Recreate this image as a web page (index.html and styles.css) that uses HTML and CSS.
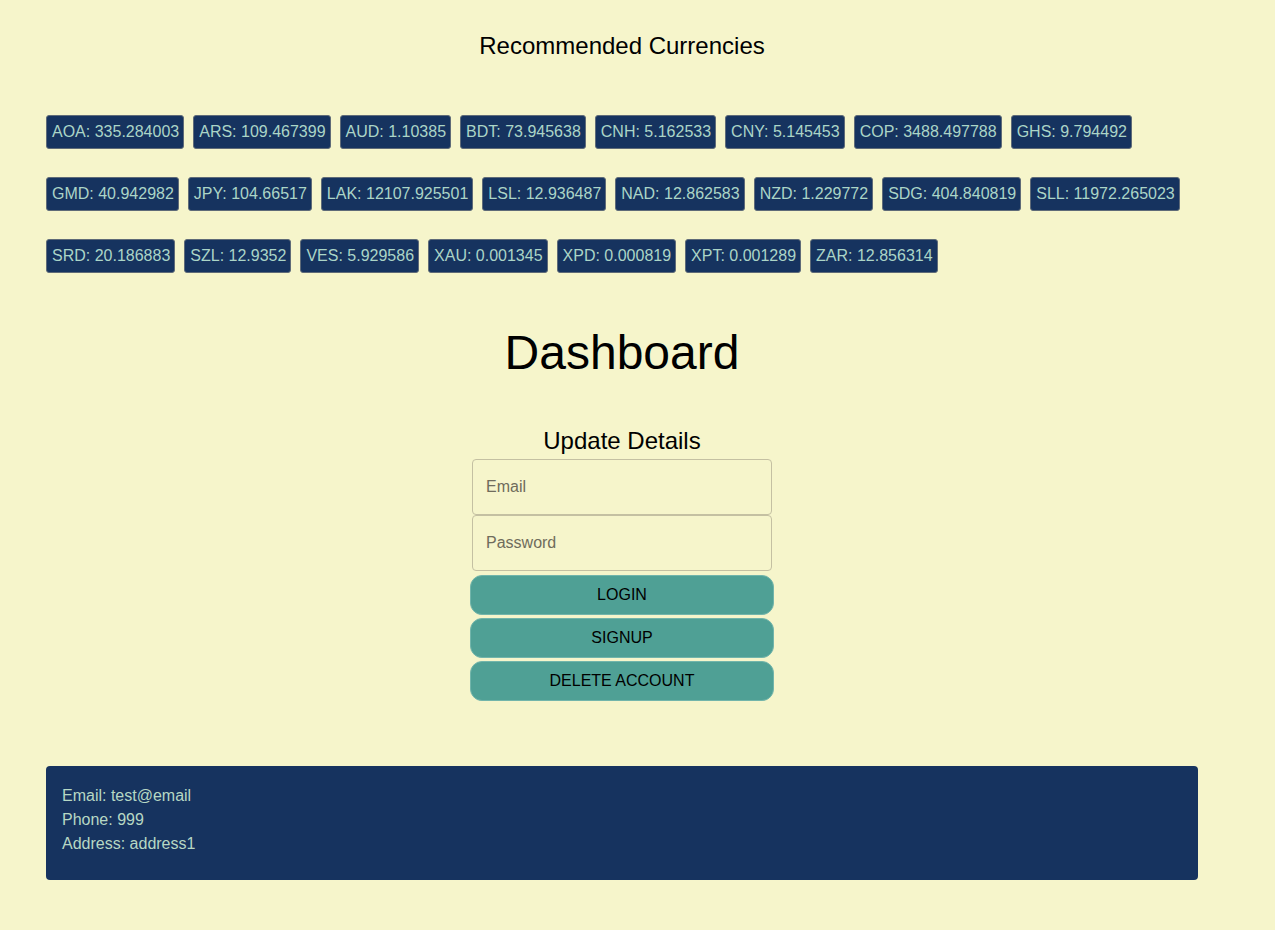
FILE: index.html
```html
<!DOCTYPE html>
<html lang="en">
<head>
<meta charset="utf-8">
<title>Dashboard</title>
<link rel="stylesheet" href="styles.css">
</head>
<body>
<div class="page">
  <h2 class="rec-title">Recommended Currencies</h2>
  <div class="badges">
    <span class="badge">AOA: 335.284003</span>
    <span class="badge">ARS: 109.467399</span>
    <span class="badge">AUD: 1.10385</span>
    <span class="badge">BDT: 73.945638</span>
    <span class="badge">CNH: 5.162533</span>
    <span class="badge">CNY: 5.145453</span>
    <span class="badge">COP: 3488.497788</span>
    <span class="badge">GHS: 9.794492</span>
    <span class="badge">GMD: 40.942982</span>
    <span class="badge">JPY: 104.66517</span>
    <span class="badge">LAK: 12107.925501</span>
    <span class="badge">LSL: 12.936487</span>
    <span class="badge">NAD: 12.862583</span>
    <span class="badge">NZD: 1.229772</span>
    <span class="badge">SDG: 404.840819</span>
    <span class="badge">SLL: 11972.265023</span>
    <span class="badge">SRD: 20.186883</span>
    <span class="badge">SZL: 12.9352</span>
    <span class="badge">VES: 5.929586</span>
    <span class="badge">XAU: 0.001345</span>
    <span class="badge">XPD: 0.000819</span>
    <span class="badge">XPT: 0.001289</span>
    <span class="badge">ZAR: 12.856314</span>
  </div>
  <h1 class="dash-title">Dashboard</h1>
  <form class="form">
    <h3 class="form-title">Update Details</h3>
    <input class="field" type="text" placeholder="Email">
    <input class="field" type="password" placeholder="Password">
    <button class="btn" type="button">LOGIN</button>
    <button class="btn" type="button">SIGNUP</button>
    <button class="btn" type="button">DELETE ACCOUNT</button>
  </form>
  <div class="info">
    <div class="info-line">Email: test@email</div>
    <div class="info-line">Phone: 999</div>
    <div class="info-line">Address: address1</div>
  </div>
</div>
</body>
</html>
```
FILE: styles.css
```css
* { box-sizing: border-box; }
html, body {
  margin: 0;
  padding: 0;
  background: #f6f5cb;
  font-family: "Liberation Sans", Arial, sans-serif;
  color: #000;
}
.page {
  width: 1152px;
  margin-left: 46px;
  padding-top: 32px;
  padding-bottom: 50px;
}
.rec-title {
  margin: 0;
  text-align: center;
  font-size: 24px;
  font-weight: normal;
  line-height: 28px;
}
.badges {
  display: flex;
  flex-wrap: wrap;
  column-gap: 9px;
  row-gap: 28px;
  margin-top: 55px;
  padding-right: 10px;
}
.badge {
  display: inline-flex;
  align-items: center;
  height: 34px;
  padding: 0 4px 0 5px;
  background: #16335f;
  color: #abd5c7;
  border: 1px solid #5f6b78;
  border-radius: 3px;
  font-size: 16px;
}
.dash-title {
  margin: 52px 0 0;
  text-align: center;
  font-size: 48px;
  font-weight: normal;
  line-height: 56px;
}
.form {
  display: flex;
  flex-direction: column;
  align-items: center;
  margin-top: 46px;
}
.form-title {
  margin: 0 0 4px;
  font-size: 24px;
  font-weight: normal;
  line-height: 28px;
}
.field {
  width: 300px;
  height: 56px;
  margin: 0;
  padding: 0 13px;
  background: #f6f5cb;
  border: 1px solid #c4c0a2;
  border-radius: 4px;
  font-family: "Liberation Sans", Arial, sans-serif;
  font-size: 16px;
  color: #333;
  outline: none;
}
.field::placeholder { color: #6f6c5c; }
.btn {
  width: 304px;
  height: 40px;
  margin-top: 3px;
  background: #4fa095;
  border: 1px solid #72b5ab;
  border-radius: 12px;
  font-family: "Liberation Sans", Arial, sans-serif;
  font-size: 16px;
  color: #000;
  cursor: pointer;
}
.field + .btn { margin-top: 4px; }
.info {
  margin-top: 65px;
  background: #16335f;
  color: #b6d8c4;
  border-radius: 4px;
  padding: 18px 16px 24px;
  font-size: 16px;
  line-height: 24px;
  height: 114px;
}
```
